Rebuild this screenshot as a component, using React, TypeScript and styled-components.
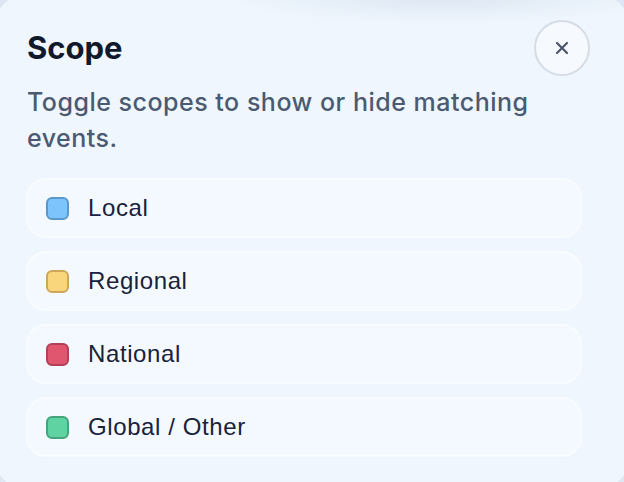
import styled, { createGlobalStyle } from 'styled-components';

const GlobalStyle = createGlobalStyle`
    html, body {
        margin: 0;
        padding: 0;
        background: #dde6f2;
        overflow: hidden;
    }
    body {
        font-family: 'Inter', 'Liberation Sans', sans-serif;
    }
`;

const Panel = styled.div`
    box-sizing: border-box;
    width: 636px;
    height: 496px;
    margin: -6px;
    padding: 26px 48px 0 32px;
    border-radius: 34px;
    background:
        radial-gradient(ellipse 220px 30px at 450px 0px, rgba(214, 224, 238, 0.8), transparent),
        #eff6fd;
`;

const Header = styled.div`
    display: flex;
    justify-content: space-between;
    align-items: flex-start;
`;

const Title = styled.h2`
    margin: 9px 0 0 1px;
    font-size: 31px;
    line-height: 38px;
    font-weight: 700;
    color: #111a2c;
`;

const CloseButton = styled.button`
    box-sizing: border-box;
    display: flex;
    align-items: center;
    justify-content: center;
    width: 56px;
    height: 56px;
    margin: 0 -8px 0 0;
    padding: 0;
    border: 2px solid #d6dce6;
    border-radius: 50%;
    background: #f6f9fd;
    color: #4b5568;
    cursor: pointer;
`;

const Subtitle = styled.p`
    margin: 8px 0 0 1px;
    font-size: 25px;
    line-height: 36px;
    letter-spacing: 0.5px;
    font-weight: 500;
    color: #4a5b71;
`;

const List = styled.ul`
    list-style: none;
    margin: 22px 0 0;
    padding: 0;
    display: flex;
    flex-direction: column;
    gap: 13px;
`;

const Row = styled.li`
    box-sizing: border-box;
    display: flex;
    align-items: center;
    gap: 19px;
    height: 60px;
    padding: 0 18px;
    border: 2px solid #f9fcff;
    border-radius: 20px;
    background: #f4f9ff;
    cursor: pointer;
`;

const Swatch = styled.span<{ fill: string; edge: string }>`
    box-sizing: border-box;
    width: 23px;
    height: 23px;
    flex: none;
    border-radius: 6px;
    background: ${p => p.fill};
    border: 2px solid ${p => p.edge};
`;

const Label = styled.span`
    font-family: 'Liberation Sans', Arial, sans-serif;
    font-size: 24px;
    letter-spacing: 0.6px;
    color: #18223a;
`;

const scopes = [
    { name: 'Local', fill: '#7cc4fb', edge: '#5a98cc' },
    { name: 'Regional', fill: '#f9d57b', edge: '#cda659' },
    { name: 'National', fill: '#e0566f', edge: '#b33f58' },
    { name: 'Global / Other', fill: '#60d3a2', edge: '#44a57c' },
];

function App() {
    return (
        <>
            <GlobalStyle />
            <Panel>
                <Header>
                    <Title>Scope</Title>
                    <CloseButton aria-label="Close">
                        <svg width="14" height="14" viewBox="0 0 14 14">
                            <path d="M2 2 L12 12 M12 2 L2 12" stroke="currentColor" strokeWidth="2.2" strokeLinecap="round" />
                        </svg>
                    </CloseButton>
                </Header>
                <Subtitle>Toggle scopes to show or hide matching events.</Subtitle>
                <List>
                    {scopes.map(s => (
                        <Row key={s.name}>
                            <Swatch fill={s.fill} edge={s.edge} />
                            <Label>{s.name}</Label>
                        </Row>
                    ))}
                </List>
            </Panel>
        </>
    );
}

export default App;
